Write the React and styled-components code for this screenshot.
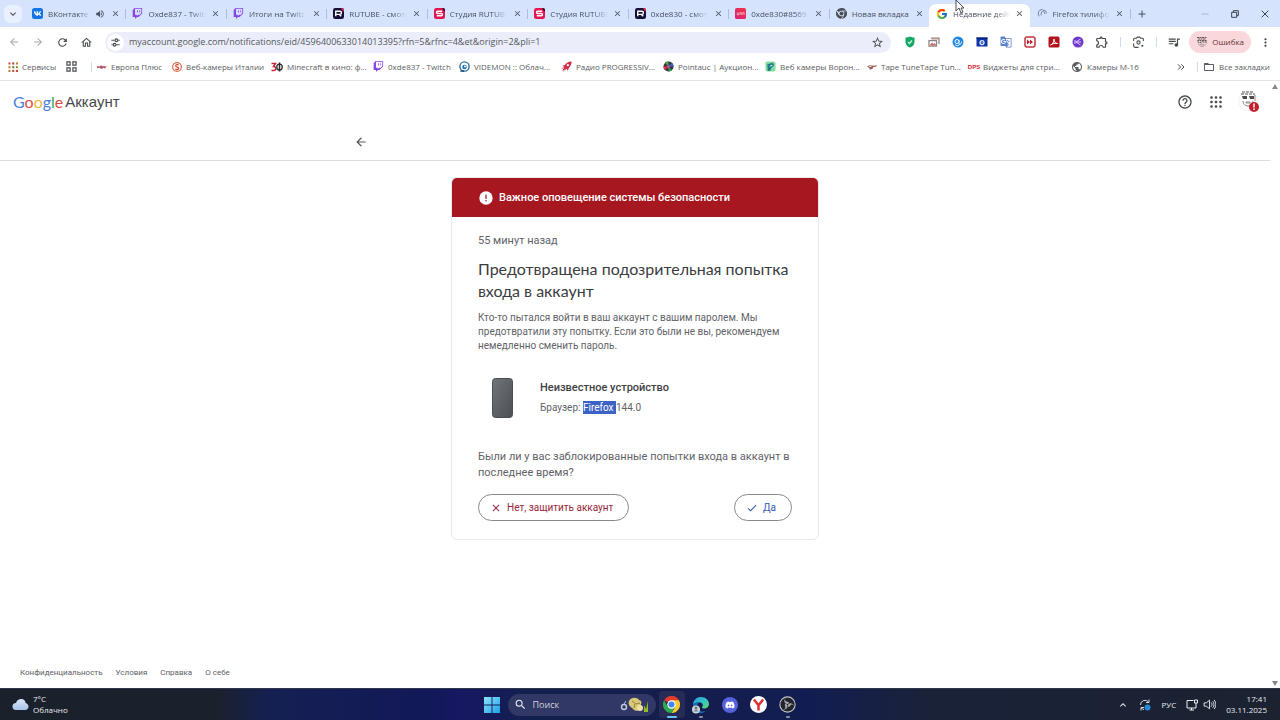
import React from "react";
import styled, { createGlobalStyle, css } from "styled-components";
import {
  MdArrowBack, MdArrowForward, MdRefresh, MdOutlineHome, MdStarBorder, MdOutlineExtension,
  MdQueueMusic, MdMoreVert, MdFolderOpen, MdHelpOutline, MdClose, MdCheck, MdVolumeUp,
  MdAdd, MdKeyboardArrowDown, MdKeyboardArrowUp, MdSearch, MdPublic, MdGTranslate,
} from "react-icons/md";
import { FcGoogle } from "react-icons/fc";
import { FaVk, FaDiscord } from "react-icons/fa";
import { BsTwitch } from "react-icons/bs";

const ui = `"Open Sans", "Noto Sans", sans-serif`;
const body = `Roboto, "Noto Sans", sans-serif`;

const Global = createGlobalStyle`
  *, *::before, *::after { box-sizing: border-box; }
  body { margin: 0; background: #fff; font-family: ${body}; }
  h1, h2, p { margin: 0; }
  button, input { font: inherit; color: inherit; }
  button { padding: 0; border: 0; background: none; cursor: pointer; }
  a { color: inherit; text-decoration: none; }
  svg { display: block; flex: none; }
`;

const Screen = styled.div`
  display: flex;
  flex-direction: column;
  min-height: 100vh;
  position: relative;
`;

/* ---------- Tab strip ---------- */

const TabStrip = styled.div`
  display: flex;
  align-items: center;
  height: 27px;
  background: #d5e3fd;
  color: #4a5160;
  font: 9px/14px ${ui};
`;
const TabSearch = styled.button`
  display: grid;
  place-items: center;
  width: 18px;
  height: 18px;
  margin: 0 3px 0 4px;
  border-radius: 6px;
  background: #e9f1fe;
`;
const Tabs = styled.div`
  display: flex;
  flex: 1;
  min-width: 0;
  align-self: stretch;
`;
const Tab = styled.div`
  display: flex;
  align-items: center;
  flex: 1 1 0;
  min-width: 0;
  gap: 5px;
  margin-top: ${(p) => (p.$active ? "4px" : "0")};
  padding: ${(p) => (p.$active ? "0 6px 4px 7px" : "0 6px 0 7px")};
  border-radius: 7px 7px 0 0;
  background: ${(p) => (p.$active ? "#fff" : "transparent")};
  &::after {
    content: "";
    width: 1px;
    height: 10px;
    margin-right: -7px;
    background: ${(p) => (p.$divider ? "#aebfdc" : "transparent")};
  }
`;
const TabTitle = styled.span`
  flex: 1;
  min-width: 0;
  overflow: hidden;
  white-space: nowrap;
  font-size: 8px;
  mask-image: ${(p) => (p.$fade ? "linear-gradient(to right, #000 75%, transparent)" : "none")};
`;
const TabClose = styled.button`
  display: grid;
  place-items: center;
  width: 10px;
  height: 14px;
`;
const NewTab = styled.button`
  display: grid;
  place-items: center;
  width: 24px;
  height: 18px;
`;
const WindowButtons = styled.div`
  display: flex;
  margin-left: 36px;
`;
const WindowButton = styled.button`
  display: grid;
  place-items: center;
  width: 30px;
  height: 24px;
`;

/* ---------- Toolbar ---------- */

const Toolbar = styled.div`
  display: flex;
  align-items: center;
  height: 30px;
  padding: 0 5px 0 2px;
  color: #45484d;
`;
const ToolButton = styled.button`
  display: grid;
  place-items: center;
  width: 24px;
  height: 24px;
  color: ${(p) => (p.$dim ? "#a6a9ae" : "inherit")};
`;
const Address = styled.label`
  display: flex;
  align-items: center;
  flex: 1;
  height: 21px;
  margin: 0 7px;
  padding: 0 2px;
  border-radius: 11px;
  background: #ebeefa;
`;
const SiteInfo = styled.span`
  display: grid;
  place-items: center;
  width: 17px;
  height: 17px;
  border-radius: 50%;
  background: #fff;
`;
const AddressInput = styled.input`
  flex: 1;
  min-width: 0;
  margin-left: 5px;
  padding: 0;
  border: 0;
  background: none;
  color: #54575e;
  font: 9px/16px ${ui};
  outline: none;
`;
const Divider = styled.span`
  width: 1px;
  height: 10px;
  margin: 0 5px 0 6px;
  background: #cfdbef;
`;
const ErrorChip = styled.button`
  display: flex;
  align-items: center;
  gap: 4px;
  height: 22px;
  margin: 0 4px 0 3px;
  padding: 0 7px;
  border-radius: 11px;
  background: #f9d7da;
  color: #5f3439;
  font: 8px/14px ${ui};
`;
const MenuButton = styled(ToolButton)`
  width: 20px;
`;

/* ---------- Bookmarks ---------- */

const Bookmarks = styled.nav`
  display: flex;
  align-items: center;
  height: 24px;
  padding: 0 9px 4px 8px;
  border-bottom: 1px solid #e1e4e8;
  color: #5a5d62;
  font: 8px/14px ${ui};
  white-space: nowrap;
`;
const Bookmark = styled.a`
  display: flex;
  align-items: center;
  gap: 4px;
  width: ${(p) => p.$width}px;
`;
const Spacer = styled.span`
  flex: 1;
`;
const DpsMark = styled.span`
  color: #d8202f;
  font: 700 6px/10px "Liberation Sans", sans-serif;
  width: 10px;
  display: flex;
  justify-content: center;
`;

/* ---------- Account page ---------- */

const Viewport = styled.div`
  display: flex;
  flex: 1;
`;
const Page = styled.main`
  display: flex;
  flex-direction: column;
  flex: 1;
  min-width: 0;
`;
const Scrollbar = styled.div`
  display: flex;
  flex-direction: column;
  justify-content: space-between;
  align-items: center;
  width: 10px;
  padding: 3px 0 2px;
`;
const AppHeader = styled.header`
  display: flex;
  align-items: center;
  justify-content: space-between;
  height: 42px;
  padding: 0 12px 0 13px;
`;
const Brand = styled.a`
  display: flex;
  align-items: center;
  gap: 2px;
  color: #45484b;
  font: 15px/20px "Liberation Sans", sans-serif;
`;
const GoogleWord = styled.span`
  font: 16px/20px Lato, "Liberation Sans", sans-serif;
`;
const Letter = styled.span`
  color: ${(p) => p.$color};
`;
const HeaderActions = styled.div`
  display: flex;
  gap: 9px;
`;
const HeaderButton = styled.button`
  display: grid;
  place-items: center;
  width: 22px;
  height: 24px;
  color: #46494d;
`;
const SubHeader = styled.div`
  height: 38px;
  border-bottom: 1px solid #dcdee0;
`;
const SubHeaderInner = styled.div`
  display: flex;
  align-items: center;
  width: 100%;
  max-width: 562px;
  height: 37px;
  margin: 0 auto;
  color: #55585c;
`;
const Card = styled.section`
  width: 368px;
  max-width: 100%;
  margin: 16px auto 0;
  border: 1px solid #e8eaec;
  border-radius: 6px;
  overflow: hidden;
`;
const Alert = styled.div`
  display: flex;
  align-items: center;
  gap: 6px;
  height: 39px;
  padding: 0 27px;
  background: #a7171f;
  color: #fff;
`;
const AlertTitle = styled.h2`
  font: 500 11px/16px ${body};
`;
const CardBody = styled.div`
  padding: 16px 26px 18px;
  color: #5f6368;
`;
const Time = styled.p`
  font-size: 11px;
  line-height: 16px;
`;
const Title = styled.h1`
  margin-top: 9px;
  color: #3a3c40;
  font: 400 16px/22px Lato, Roboto, sans-serif;
`;
const Lead = styled.p`
  margin-top: 9px;
  font-size: 10px;
  line-height: 14px;
`;
const Device = styled.div`
  display: flex;
  gap: 27px;
  margin-top: 25px;
  padding-left: 14px;
`;
const DeviceName = styled.p`
  color: #3e4145;
  font-size: 11px;
  font-weight: 500;
  line-height: 20px;
`;
const Browser = styled.p`
  font-size: 10px;
  line-height: 20px;
`;
const Selected = styled.mark`
  padding: 1px 0;
  background: #3b62c5;
  color: #fff;
  white-space: pre;
`;
const Question = styled.p`
  margin-top: 31px;
  font-size: 11px;
  line-height: 16px;
`;
const Answers = styled.div`
  display: flex;
  justify-content: space-between;
  margin-top: 13px;
`;
const Answer = styled.button`
  display: flex;
  align-items: center;
  gap: 5px;
  height: 27px;
  padding: 0 15px 0 11px;
  border: 1px solid #85888c;
  border-radius: 14px;
  color: ${(p) => (p.$danger ? "#97263a" : "#3259b4")};
  font-size: 10px;
`;
const Footer = styled.footer`
  display: flex;
  gap: 13px;
  margin-top: auto;
  padding: 16px 20px 7px;
  color: #5d6064;
  font-size: 8px;
  line-height: 16px;
`;

/* ---------- Taskbar ---------- */

const Taskbar = styled.div`
  display: grid;
  grid-template-columns: 1fr auto 1fr;
  align-items: center;
  height: 32px;
  padding: 0 13px 0 12px;
  border-top: 1px solid #30374a;
  background: linear-gradient(to right, #1b212b 0%, #1b212c 17%, #152052 21%, #121858 34%, #171862 36%, #12204c 42%, #151d4c 53%, #111d52 63%, #1a2239 72%, #1b2230 100%);
  color: #e9ebef;
  font: 8px/11px ${ui};
`;
const Weather = styled.button`
  display: flex;
  align-items: center;
  justify-self: start;
  gap: 4px;
  text-align: left;
`;
const TwoLines = styled.span`
  display: flex;
  flex-direction: column;
  padding-bottom: 2px;
`;
const TaskCenter = styled.div`
  display: flex;
  align-items: center;
  gap: 3px;
`;
const TaskIcon = styled.button`
  display: flex;
  flex-direction: column;
  align-items: center;
  justify-content: center;
  position: relative;
  width: 26px;
  height: 27px;
  border-radius: 4px;
  background: ${(p) => (p.$state === "active" ? "#272c57" : "transparent")};
  ${(p) => p.$state && css`
    &::after {
      content: "";
      position: absolute;
      bottom: 0;
      width: ${p.$state === "active" ? "10px" : "4px"};
      height: 2px;
      border-radius: 1px;
      background: ${p.$state === "active" ? "#6fc3f2" : "#8a90a4"};
    }
  `}
`;
const TaskSearch = styled.label`
  display: flex;
  align-items: center;
  gap: 6px;
  width: 148px;
  height: 22px;
  padding: 0 6px;
  border-radius: 11px;
  background: #323866;
`;
const TaskInput = styled.input`
  flex: 1;
  min-width: 0;
  padding: 0;
  border: 0;
  background: none;
  font: 9px/14px ${ui};
  outline: none;
  &::placeholder { color: #ced1de; opacity: 1; }
`;
const Tray = styled.div`
  display: flex;
  align-items: center;
  justify-self: end;
  gap: 10px;
`;
const TrayButton = styled.button`
  display: flex;
  align-items: center;
  gap: 5px;
`;
const Clock = styled(TwoLines)`
  align-items: flex-end;
`;
const Pointer = styled.svg`
  position: absolute;
  top: 0;
  left: 955px;
  pointer-events: none;
`;

/* ---------- Drawings ---------- */

const Svg = ({ size = 12, box = 24, children }) => (
  <svg width={size} height={size} viewBox={`0 0 ${box} ${box}`} fill="none" aria-hidden="true">{children}</svg>
);
const VkIcon = () => (
  <svg width="11" height="11" viewBox="0 0 22 22" aria-hidden="true">
    <rect width="22" height="22" rx="5" fill="#1673e6" />
    <FaVk x="3" y="3" size={16} color="#fff" />
  </svg>
);
const Twitch = () => <BsTwitch size={11} color="#8a45e6" />;
const Rutube = () => (
  <Svg size={11}>
    <rect width="24" height="24" rx="5" fill="#160d38" />
    <path d="M18 0h1a5 5 0 015 5v3a9 9 0 01-6-8z" fill="#ef2a4a" />
    <path d="M6 18V7h9a3 3 0 010 7H6m8 0l4 4" stroke="#fff" strokeWidth="3" />
  </Svg>
);
const Studio = () => (
  <Svg size={11}>
    <rect width="24" height="24" rx="5" fill="#e3154f" />
    <path d="M18 0h1a5 5 0 015 5v3a9 9 0 01-6-8z" fill="#210b34" />
    <path d="M18 7H8a2.500 2.500 0 000 5h8a2.500 2.500 0 010 5H6" stroke="#fff" strokeWidth="3" />
  </Svg>
);
const PinkIcon = () => (
  <Svg size={11}>
    <defs><linearGradient id="pink" x1="0" x2="1" y1="1" y2="0"><stop stopColor="#d92277" /><stop offset="1" stopColor="#ef3548" /></linearGradient></defs>
    <rect width="24" height="24" rx="4" fill="url(#pink)" />
    <path d="M5 10v5h3v-5m3 5v-5h3v5m3 0v-5h3v5" stroke="#ffd1dc" strokeWidth="1.500" />
  </Svg>
);
const ChromeIcon = ({ size = 11, mono }) => {
  const c = mono ? ["#4b4f56", "#4b4f56", "#4b4f56", "#4b4f56"] : ["#e33b2e", "#fcc934", "#2da94f", "#4285f4"];
  return (
    <Svg size={size}>
      <path d="M12 12L1.600 6A12 12 0 0122.400 6z" fill={c[0]} />
      <path d="M12 12V0a12 12 0 0110.400 6H12z" fill={c[0]} />
      <path d="M22.400 6A12 12 0 0112 24l5.200-9L12 6z" fill={c[1]} />
      <path d="M1.600 6A12 12 0 0012 24l5.200-9H6.800z" fill={c[2]} />
      {mono && <path d="M12 6.500h10M7 15L2 6.500M17 15l-5 9" stroke="#d5e3fd" strokeWidth="1.500" />}
      <circle cx="12" cy="12" r="6" fill={mono ? "#d5e3fd" : "#fff"} />
      <circle cx="12" cy="12" r="4.300" fill={c[3]} />
    </Svg>
  );
};
const Swirl = () => (
  <Svg size={11}><path d="M5 18A9 9 0 0112 3M9 16c-1-6 2-10 6-11 4 0 6 3 5 7M13 9c2-2 5 0 4 4" stroke="#6e7c9c" strokeWidth="2" /></Svg>
);
const TuneIcon = () => (
  <Svg size={11}><path d="M3 7h7M18 7h3M3 17h3M14 17h7" stroke="#45484d" strokeWidth="2.500" /><circle cx="14" cy="7" r="3" stroke="#45484d" strokeWidth="2.500" /><circle cx="10" cy="17" r="3" stroke="#45484d" strokeWidth="2.500" /></Svg>
);
const ShieldExt = () => (
  <Svg><path d="M12 1c4 2 7 2 9 2v9c0 6-4 9-9 11-5-2-9-5-9-11V3c3 0 6-.5 9-2z" fill="#16a765" /><path d="M8 12l3 3 5-6" stroke="#c9f5df" strokeWidth="2.500" /></Svg>
);
const PhotoExt = () => (
  <Svg><path d="M6 4h16v12M2 9h15v11H2z" stroke="#8b8384" strokeWidth="2.500" /><path d="M3 19l5-6 3 3 2-2 4 5z" fill="#c56a60" /><path d="M7 6h13" stroke="#cf8d84" strokeWidth="2" /></Svg>
);
const BlueExt = () => (
  <Svg><circle cx="12" cy="12" r="11" fill="#1e88e5" /><circle cx="10" cy="11" r="4" stroke="#fff" strokeWidth="2" /><path d="M14 8v9c3 1 5-2 5-6M6 17c2 3 6 3 8 1" stroke="#d9edff" strokeWidth="2" /></Svg>
);
const NavyExt = () => (
  <Svg><path d="M1 3h22v18H1z" fill="#0b35a8" /><path d="M1 3h22v3H1z" fill="#082573" /><circle cx="12" cy="13" r="4" stroke="#e4edff" strokeWidth="2.500" /><circle cx="12" cy="13" r="1" fill="#fff" /></Svg>
);
const ForwardExt = () => (
  <Svg><rect x="2" y="2" width="20" height="20" rx="4" stroke="#c73541" strokeWidth="3" /><path d="M6 7l6 5-6 5zM12 7l6 5-6 5z" fill="#c1202f" /></Svg>
);
const PdfExt = () => (
  <Svg><rect x="1" y="1" width="22" height="22" rx="3" fill="#b3141c" /><path d="M5 18c4-1 7-6 7-12 0 6 3 9 7 9-5-1-9 0-14 3z" stroke="#fff" strokeWidth="2" /></Svg>
);
const PurpleExt = () => (
  <Svg><circle cx="12" cy="12" r="11" fill="#7037cf" /><path d="M17 6l-9 6 9 6M8 12h10M6 8v8" stroke="#dccbff" strokeWidth="2" /></Svg>
);
const LensIcon = () => (
  <Svg size={13}><path d="M3 9V6a2 2 0 012-2h3l2-2h4l2 2h3a2 2 0 012 2v3M3 14v4a3 3 0 003 3h6" stroke="#45484d" strokeWidth="2" /><circle cx="12" cy="12" r="3" stroke="#45484d" strokeWidth="2" /><circle cx="19" cy="18" r="2" fill="#45484d" /></Svg>
);
const Avatar = ({ size = 12 }) => (
  <Svg size={size}><path d="M2 3h19M4 6h16M3 9h7v4H5zM12 9h8v3h-7z" stroke="#55494d" strokeWidth="1.800" strokeDasharray="4 1" /><path d="M5 15c1 4 3 6 7 6s7-2 7-6M9 16h6v2H9zM21 8v8" stroke="#85787c" strokeWidth="1.400" strokeDasharray="3 1" /></Svg>
);
const DotGrid = () => (
  <Svg size={10}>
    {[3, 12, 21].map((y, r) => [3, 12, 21].map((x, c) => <rect key={x + "-" + y} x={x - 2} y={y - 2} width="5" height="5" fill={["#d3483e", "#b0493c", "#ca7d2f", "#538a48", "#a58a35", "#d04b42"][(r * 2 + c) % 6]} />))}
  </Svg>
);
const AppsIcon = () => (
  <Svg size={12}>
    {[3, 12, 21].map((y) => [3, 12, 21].map((x) => <rect key={x + "-" + y} x={x - 2.500} y={y - 2.500} width="5" height="5" rx="2" fill="#46494d" />))}
  </Svg>
);
const Squares = () => (
  <Svg size={11}><path d="M2 2h7v7H2zM15 2h7v7h-7zM2 15h7v7H2zM15 15h7v7h-7z" stroke="#45484d" strokeWidth="2.500" /></Svg>
);
const EuropaIcon = () => <Svg size={10}><path d="M0 10h8l2-2 3 2h10l-4 6-4-3-3 3H9l-3-2-6 1z" fill="#bb5a67" /><path d="M9 9l3 6 4-6" stroke="#604b63" /></Svg>;
const ItalyIcon = () => <Svg size={10}><circle cx="12" cy="12" r="10.500" stroke="#dc6c4f" strokeWidth="3" /><path d="M16 7c-5-2-8 0-7 3s7 2 7 5-5 4-8 2" stroke="#d5472f" strokeWidth="3" /></Svg>;
const ZfIcon = () => <Svg size={12}><path d="M1 5h8l-4 6c6 0 6 8 0 8H1" stroke="#c62836" strokeWidth="3" /><path d="M17 3v18" stroke="#2b2b31" strokeWidth="3" /><ellipse cx="17" cy="12" rx="5.500" ry="6" stroke="#2b2b31" strokeWidth="2.500" /></Svg>;
const VideoIcon = () => <Svg size={11}><circle cx="12" cy="12" r="10" stroke="#2b6ba0" strokeWidth="3" /><circle cx="12" cy="13" r="5" fill="#2370aa" /><circle cx="13" cy="12" r="2" fill="#fff" /><path d="M3 22h8" stroke="#1b4870" strokeWidth="3" /></Svg>;
const RocketIcon = () => <Svg size={11}><path d="M23 1c-8 0-12 4-15 8l-5 1 4 3-4 9 9-5 3 4 2-6c4-4 6-8 6-14z" fill="#d62b46" /><circle cx="15" cy="9" r="2.500" fill="#fff" /><path d="M1 18l5-5M4 23l7-6" stroke="#e16a7c" strokeWidth="2" /></Svg>;
const BallIcon = () => <Svg size={11}><circle cx="12" cy="12" r="11" fill="#383645" /><path d="M12 12L4 4a11 11 0 018-3z" fill="#4ba34b" /><path d="M12 12l8-8a11 11 0 013 8z" fill="#3765c5" /><path d="M12 12l8 8a11 11 0 01-8 3z" fill="#2f9c4d" /><path d="M12 12l-8 8a11 11 0 01-3-8z" fill="#d6344b" /><circle cx="12" cy="12" r="3" fill="#d54f9d" /></Svg>;
const CamIcon = () => <Svg size={11}><rect x="1" y="1" width="22" height="22" rx="4" fill="#84dba1" /><path d="M5 7l12-3 3 5-6 6-3 7-5-1z" fill="#237d86" /><path d="M9 13l5-5 3 2z" fill="#f1fff7" /></Svg>;
const TapeIcon = () => <Svg size={10}><path d="M0 11l7-3 9 1 7-1v3l-8 1-2 5-6 1-2-4z" fill="#9a584f" /><path d="M5 11h6" stroke="#fff" strokeWidth="2" /></Svg>;
const AlertIcon = () => <Svg size={14}><circle cx="12" cy="12" r="11.500" fill="#fff" /><path d="M12 6v7.500M12 15.500v2.500" stroke="#8f1620" strokeWidth="2" /></Svg>;
const Phone = () => (
  <svg width="21" height="40" viewBox="0 0 21 40" aria-hidden="true">
    <defs><linearGradient id="phone" x1="0" x2="1" y1="0" y2="1"><stop stopColor="#70757a" /><stop offset="1" stopColor="#4c5054" /></linearGradient></defs>
    <rect x="0.500" y="0.500" width="20" height="39" rx="3" fill="url(#phone)" stroke="#4a4e52" />
  </svg>
);
const Triangle = ({ down }) => <svg width="6" height="5" viewBox="0 0 6 5" aria-hidden="true"><path d={down ? "M0 0h6L3 5z" : "M0 5h6L3 0z"} fill="#86888a" /></svg>;
const ProfilePhoto = () => (
  <svg width="22" height="24" viewBox="-1 0 22 24" overflow="visible" aria-hidden="true">
    <circle cx="11" cy="11" r="9.500" fill="#fff" stroke="#f0f0f0" />
    <path d="M5 2h11M4 4h14" stroke="#555" strokeDasharray="3 1" />
    <path d="M5 6h5v3H6zM12 6h5v3h-4z" fill="#4d4d4d" /><path d="M6 11c0 3 2 5 5 5s5-2 5-5M9 12h4v1H9zM18 5v6" stroke="#8b8b8b" fill="none" />
    <circle cx="17" cy="17" r="5" fill="#c2202c" />
    <path d="M17 13.500v4M17 18.500v1.500" stroke="#fff" strokeWidth="1.500" />
  </svg>
);
const Cloud = () => (
  <svg width="17" height="13" viewBox="0 0 34 26" aria-hidden="true">
    <defs><linearGradient id="cloud" x2="0" y2="1"><stop stopColor="#dbe8fb" /><stop offset="1" stopColor="#a8c2ec" /></linearGradient></defs>
    <path d="M8 24a7 7 0 010-14C10 4 14 2 18 2c6 0 9 4 9 8 4 1 6 4 6 7 0 4-3 7-7 7z" fill="url(#cloud)" />
  </svg>
);
const WindowsIcon = () => (
  <Svg size={16}>
    <defs><linearGradient id="win" x2="1" y2="1"><stop stopColor="#8ce5fa" /><stop offset="1" stopColor="#1e9fe8" /></linearGradient></defs>
    <path d="M0 0h11.300v11.300H0zM12.700 0H24v11.300H12.700zM0 12.700h11.300V24H0zM12.700 12.700H24V24H12.700z" fill="url(#win)" />
  </Svg>
);
const SearchArt = () => (
  <svg width="30" height="18" viewBox="0 0 30 18" aria-hidden="true">
    <circle cx="4" cy="11" r="2.500" fill="none" stroke="#bfc6dd" strokeWidth="1.500" /><path d="M4 8l2-3" stroke="#bfc6dd" />
    <path d="M9 5c2-4 8-4 10-1 3 0 3 4 1 6 1 4-3 6-6 4-2-3-7-4-5-9z" fill="#d9c879" /><path d="M12 5l4 3 4-1M15 8l-1 4" stroke="#98813d" fill="none" /><circle cx="20" cy="12" r="3" fill="#efe1a3" />
    <path d="M24 16V9l2 4 2-8v11z" fill="#92b92c" />
  </svg>
);
const EdgeIcon = () => (
  <svg width="19" height="18" viewBox="0 0 38 36" aria-hidden="true">
    <defs><linearGradient id="edge" x2="1" y2="1"><stop stopColor="#2a9de0" /><stop offset=".5" stopColor="#36c2c6" /><stop offset="1" stopColor="#5fd66b" /></linearGradient></defs>
    <path d="M4 17C5 7 12 2 20 2c10 0 16 7 16 14 0 5-4 9-10 9-4 0-5-2-3-4 2-4-1-8-6-8C11 13 7 14 4 17z" fill="url(#edge)" />
    <path d="M4 17c4-4 9-5 13-4-5 2-6 8-3 13 3 5 9 6 15 4-4 4-8 5-12 4C8 33 3 26 4 17z" fill="#1768b7" />
    <circle cx="10" cy="27" r="8" fill="#cfd4dc" /><circle cx="10" cy="24" r="3" fill="#6c737f" /><path d="M5 31c1-5 9-5 10 0" fill="#7d8490" />
  </svg>
);
const DiscordIcon = () => (
  <svg width="16" height="16" viewBox="0 0 32 32" aria-hidden="true">
    <circle cx="16" cy="16" r="16" fill="#5661dc" />
    <FaDiscord x="6" y="6" size={20} color="#fff" />
  </svg>
);
const YandexIcon = () => <Svg size={17}><circle cx="12" cy="12" r="12" fill="#fff" /><path d="M5.500 5l6.500 8 6.500-8M12 12v8.500" stroke="#d93230" strokeWidth="3.500" /></Svg>;
const ObsIcon = () => (
  <Svg size={17}>
    <circle cx="12" cy="12" r="10.800" fill="#22242b" stroke="#c4c6cb" strokeWidth="1.500" />
    {[0, 120, 240].map((a) => <path key={a} transform={`rotate(${a} 12 12)`} d="M13 11c-5 1-7-4-4-8-1 3 0 5 3 5 2 0 3 2 1 3z" fill="#a9abb1" />)}
  </Svg>
);
const SyncIcon = () => <Svg size={12}><path d="M3 12a9 9 0 0116-6M20 1v6h-6M4 23v-6h6M5 18c1 2 3 3 5 3" stroke="#d6d9e0" strokeWidth="2" /><circle cx="17" cy="17" r="6" fill="#258bd8" /></Svg>;
const MonitorIcon = () => <Svg size={12}><path d="M15 3H2v15h18v-6M7 22h9M11 18v4" stroke="#eceef2" strokeWidth="2" /><path d="M17 2h6v6h-6zM20 8v4" stroke="#eceef2" strokeWidth="2" /></Svg>;
const SoundIcon = () => <Svg size={13}><path d="M2 9v6h4l6 5V4L6 9zM15 8c2 2 2 6 0 8M18 6c3 3 3 9 0 12M20.500 3.500c4 5 4 12 0 17" stroke="#eceef2" strokeWidth="1.700" /></Svg>;

/* ---------- Data ---------- */

const tabs = [
  { icon: <VkIcon />, title: "ВКонтакте", sound: true, divider: true },
  { icon: <Twitch />, title: "Oxde837 - Twitch", divider: true },
  { icon: <Twitch />, title: "Итоги на Twitch", divider: true },
  { icon: <Rutube />, title: "RUTUBE - смотри", divider: true },
  { icon: <Studio />, title: "Студия RUTUBE", divider: true },
  { icon: <Studio />, title: "Студия RUTUBE", divider: true },
  { icon: <Rutube />, title: "0xde830 - смотри", divider: true },
  { icon: <PinkIcon />, title: "0xde830#8569", divider: true },
  { icon: <ChromeIcon mono />, title: "Новая вкладка", short: true },
  { icon: <FcGoogle size={12} />, title: "Недавние действия", active: true },
  { icon: <Swirl />, title: "Firefox тилифон", divider: true },
];
const extensions = [
  ["Защита", <ShieldExt />], ["Снимок", <PhotoExt />], ["Поиск музыки", <BlueExt />], ["Запись", <NavyExt />],
  ["Переводчик", <MdGTranslate size={12} color="#5d80cb" />], ["Ускорение", <ForwardExt />], ["PDF", <PdfExt />],
  ["Поделиться", <PurpleExt />], ["Расширения", <MdOutlineExtension size={14} />],
];
const bookmarks = [
  [<EuropaIcon />, "Европа Плюс", 75], [<ItalyIcon />, "Веб-камеры Италии", 99], [<ZfIcon />, "Minecraft в кино: ф...", 102],
  [<Twitch />, "0xde837 - Twitch", 86], [<VideoIcon />, "VIDEMON :: Облач...", 102], [<RocketIcon />, "Радио PROGRESSIV...", 102],
  [<BallIcon />, "Pointauc | Аукцион...", 102], [<CamIcon />, "Веб камеры Ворон...", 102], [<TapeIcon />, "Tape TuneTape Tun...", 102],
  [<DpsMark>DPS</DpsMark>, "Виджеты для стри...", 102], [<MdPublic size={12} />, "Камеры М-16", 75],
];
const google = [["G", "#4b80dd"], ["o", "#d94c43"], ["o", "#edb932"], ["g", "#4b80dd"], ["l", "#3da35a"], ["e", "#d94c43"]];

export default function App() {
  return (
    <Screen>
      <Global />
      <TabStrip>
        <TabSearch aria-label="Поиск вкладок"><MdKeyboardArrowDown size={12} /></TabSearch>
        <Tabs>
          {tabs.map((t, i) => (
            <Tab key={i} $active={t.active} $divider={t.divider}>
              {t.icon}
              <TabTitle $fade={!t.short}>{t.title}</TabTitle>
              {t.sound && <MdVolumeUp size={10} />}
              <TabClose aria-label="Закрыть"><MdClose size={9} /></TabClose>
            </Tab>
          ))}
        </Tabs>
        <NewTab aria-label="Новая вкладка"><MdAdd size={12} /></NewTab>
        <WindowButtons>
          <WindowButton aria-label="Свернуть"><Svg size={8}><path d="M1 12h22" stroke="#9ba7bd" strokeWidth="2" /></Svg></WindowButton>
          <WindowButton aria-label="Развернуть"><Svg size={8}><path d="M2 7h15v15H2zM7 6V2h15v15h-4" stroke="#3c4350" strokeWidth="3" /></Svg></WindowButton>
          <WindowButton aria-label="Закрыть окно"><Svg size={8}><path d="M2 2l20 20M22 2L2 22" stroke="#3c4350" strokeWidth="3" /></Svg></WindowButton>
        </WindowButtons>
      </TabStrip>

      <Toolbar>
        <ToolButton $dim aria-label="Назад"><MdArrowBack size={12} /></ToolButton>
        <ToolButton $dim aria-label="Вперёд"><MdArrowForward size={12} /></ToolButton>
        <ToolButton aria-label="Обновить"><MdRefresh size={13} /></ToolButton>
        <ToolButton aria-label="Домой"><MdOutlineHome size={13} /></ToolButton>
        <Address>
          <SiteInfo><TuneIcon /></SiteInfo>
          <AddressInput aria-label="Адрес" defaultValue="myaccount.google.com/notifications/eid/4596400633014013395?rfn=5&rfnc=4&et&origin=2&pli=1" />
          <ToolButton aria-label="В закладки"><MdStarBorder size={13} /></ToolButton>
        </Address>
        {extensions.map(([name, icon]) => <ToolButton key={name} aria-label={name}>{icon}</ToolButton>)}
        <Divider />
        <ToolButton aria-label="Объектив"><LensIcon /></ToolButton>
        <Divider />
        <ToolButton aria-label="Медиа"><MdQueueMusic size={14} /></ToolButton>
        <ErrorChip><Avatar />Ошибка</ErrorChip>
        <MenuButton aria-label="Меню"><MdMoreVert size={13} /></MenuButton>
      </Toolbar>

      <Bookmarks>
        <Bookmark href="#" $width={58}><DotGrid />Сервисы</Bookmark>
        <Bookmark href="#" $width={19} aria-label="Группы вкладок"><Squares /></Bookmark>
        <Divider />
        {bookmarks.map(([icon, name, width]) => <Bookmark key={name} href="#" $width={width}>{icon}{name}</Bookmark>)}
        <Spacer />
        <MenuButton aria-label="Ещё закладки"><Svg size={8}><path d="M3 4l8 8-8 8M13 4l8 8-8 8" stroke="#45484d" strokeWidth="3" /></Svg></MenuButton>
        <Divider />
        <Bookmark href="#" $width={68}><MdFolderOpen size={12} />Все закладки</Bookmark>
      </Bookmarks>

      <Viewport>
        <Page>
          <AppHeader>
            <Brand href="#">
              <GoogleWord>{google.map(([c, color], i) => <Letter key={i} $color={color}>{c}</Letter>)}</GoogleWord>
              Аккаунт
            </Brand>
            <HeaderActions>
              <HeaderButton aria-label="Справка"><MdHelpOutline size={16} /></HeaderButton>
              <HeaderButton aria-label="Приложения"><AppsIcon /></HeaderButton>
              <HeaderButton aria-label="Профиль"><ProfilePhoto /></HeaderButton>
            </HeaderActions>
          </AppHeader>
          <SubHeader>
            <SubHeaderInner><button aria-label="Назад к событиям"><MdArrowBack size={14} /></button></SubHeaderInner>
          </SubHeader>
          <Card>
            <Alert><AlertIcon /><AlertTitle>Важное оповещение системы безопасности</AlertTitle></Alert>
            <CardBody>
              <Time>55 минут назад</Time>
              <Title>Предотвращена подозрительная попытка входа в аккаунт</Title>
              <Lead>Кто-то пытался войти в ваш аккаунт с вашим паролем. Мы предотвратили эту попытку. Если это были не вы, рекомендуем немедленно сменить пароль.</Lead>
              <Device>
                <Phone />
                <div>
                  <DeviceName>Неизвестное устройство</DeviceName>
                  <Browser>Браузер: <Selected>Firefox </Selected>144.0</Browser>
                </div>
              </Device>
              <Question>Были ли у вас заблокированные попытки входа в аккаунт в последнее время?</Question>
              <Answers>
                <Answer $danger><MdClose size={12} />Нет, защитить аккаунт</Answer>
                <Answer><MdCheck size={12} />Да</Answer>
              </Answers>
            </CardBody>
          </Card>
          <Footer>
            <a href="#">Конфиденциальность</a><a href="#">Условия</a><a href="#">Справка</a><a href="#">О себе</a>
          </Footer>
        </Page>
        <Scrollbar><Triangle /><Triangle down /></Scrollbar>
      </Viewport>

      <Taskbar>
        <Weather><Cloud /><TwoLines><span>7°C</span><span>Облачно</span></TwoLines></Weather>
        <TaskCenter>
          <TaskIcon aria-label="Пуск"><WindowsIcon /></TaskIcon>
          <TaskSearch><MdSearch size={13} /><TaskInput type="text" aria-label="Поиск" placeholder="Поиск" /><SearchArt /></TaskSearch>
          <TaskIcon aria-label="Chrome" $state="active"><ChromeIcon size={17} /></TaskIcon>
          <TaskIcon aria-label="Edge" $state="open"><EdgeIcon /></TaskIcon>
          <TaskIcon aria-label="Discord"><DiscordIcon /></TaskIcon>
          <TaskIcon aria-label="Яндекс"><YandexIcon /></TaskIcon>
          <TaskIcon aria-label="OBS" $state="open"><ObsIcon /></TaskIcon>
        </TaskCenter>
        <Tray>
          <TrayButton aria-label="Скрытые значки"><MdKeyboardArrowUp size={12} /></TrayButton>
          <TrayButton aria-label="Обновление"><SyncIcon /></TrayButton>
          <TrayButton>РУС</TrayButton>
          <TrayButton aria-label="Сеть и звук"><MonitorIcon /><SoundIcon /></TrayButton>
          <Clock><span>17:41</span><span>03.11.2025</span></Clock>
        </Tray>
      </Taskbar>

      <Pointer width="10" height="14" viewBox="0 0 10 14" aria-hidden="true">
        <path d="M1 0v11l3-3 2 5 2-1-2-4h3z" fill="#fff" stroke="#4a4a52" />
      </Pointer>
    </Screen>
  );
}
